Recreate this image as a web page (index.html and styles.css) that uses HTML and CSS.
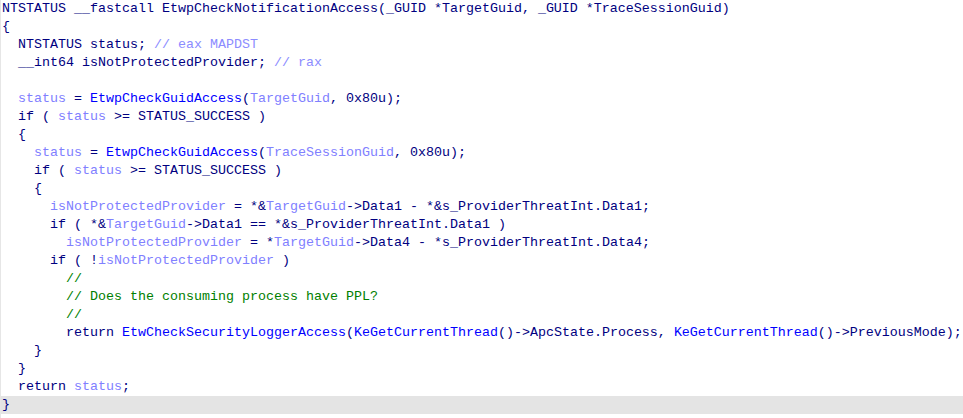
FILE: index.html
```html
<!DOCTYPE html>
<html>
<head>
<meta charset="utf-8">
<link rel="stylesheet" href="styles.css">
</head>
<body>
<div class="view">
<div class="line">NTSTATUS __fastcall EtwpCheckNotificationAccess(_GUID *TargetGuid, _GUID *TraceSessionGuid)</div>
<div class="line">{</div>
<div class="line">  NTSTATUS status; <span class="ac">// eax MAPDST</span></div>
<div class="line">  __int64 isNotProtectedProvider; <span class="ac">// rax</span></div>
<div class="line"> </div>
<div class="line">  <span class="v">status</span> = <span class="f">EtwpCheckGuidAccess</span>(<span class="v">TargetGuid</span>, 0x80u);</div>
<div class="line">  if ( <span class="v">status</span> &gt;= STATUS_SUCCESS )</div>
<div class="line">  {</div>
<div class="line">    <span class="v">status</span> = <span class="f">EtwpCheckGuidAccess</span>(<span class="v">TraceSessionGuid</span>, 0x80u);</div>
<div class="line">    if ( <span class="v">status</span> &gt;= STATUS_SUCCESS )</div>
<div class="line">    {</div>
<div class="line">      <span class="v">isNotProtectedProvider</span> = *&amp;<span class="v">TargetGuid</span>-&gt;Data1 - *&amp;s_ProviderThreatInt.Data1;</div>
<div class="line">      if ( *&amp;<span class="v">TargetGuid</span>-&gt;Data1 == *&amp;s_ProviderThreatInt.Data1 )</div>
<div class="line">        <span class="v">isNotProtectedProvider</span> = *<span class="v">TargetGuid</span>-&gt;Data4 - *s_ProviderThreatInt.Data4;</div>
<div class="line">      if ( !<span class="v">isNotProtectedProvider</span> )</div>
<div class="line">        <span class="c">//</span></div>
<div class="line">        <span class="c">// Does the consuming process have PPL?</span></div>
<div class="line">        <span class="c">//</span></div>
<div class="line">        return <span class="f">EtwCheckSecurityLoggerAccess</span>(<span class="f">KeGetCurrentThread</span>()-&gt;ApcState.Process, <span class="f">KeGetCurrentThread</span>()-&gt;PreviousMode);</div>
<div class="line">    }</div>
<div class="line">  }</div>
<div class="line">  return <span class="v">status</span>;</div>
<div class="line current">}</div>
</div>
</body>
</html>
```
FILE: styles.css
```css
html, body {
  margin: 0;
  padding: 0;
  background: #ffffff;
}

.view {
  width: 963px;
  height: 418px;
  box-sizing: border-box;
  border-left: 1px solid #e6e6e6;
  font-family: "Liberation Mono", "DejaVu Sans Mono", monospace;
  font-size: 13.33px;
  color: #000080;
  overflow: hidden;
}

.line {
  height: 18px;
  line-height: 18px;
  padding-left: 1px;
  white-space: pre;
}

.current {
  background: #e4e4e4;
}

.v {
  color: #8080ff;
}

.ac {
  color: #8c8cff;
}

.f {
  color: #0000ff;
}

.c {
  color: #008000;
}
```
